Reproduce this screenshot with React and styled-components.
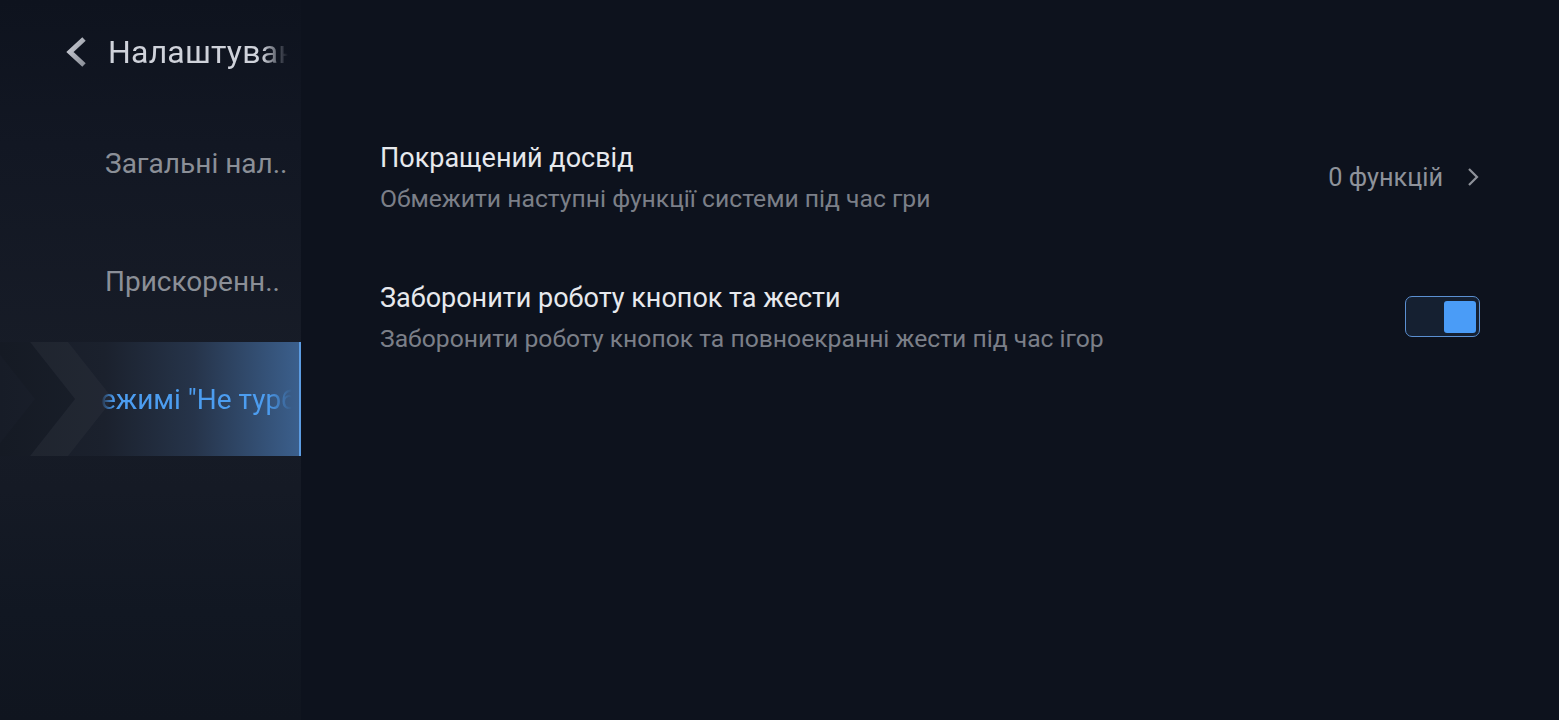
import React from 'react';
import styled, { createGlobalStyle } from 'styled-components';

const GlobalStyle = createGlobalStyle`
  html, body {
    margin: 0;
    padding: 0;
    background: #0d121d;
  }
  * {
    box-sizing: border-box;
  }
`;

const navItems = [
  { label: 'Загальні налаштування', short: 'Загальні нал..' },
  { label: 'Прискорення', short: 'Прискоренн..' },
  { label: 'Ігри в режимі "Не турбувати"', active: true, offset: -96 },
];

const BackIcon = () => (
  <BackSvg width='26' height='32' viewBox='0 0 26 32'>
    <defs>
      <linearGradient id='backGrad' x1='0' y1='0' x2='1' y2='1'>
        <stop offset='0' stopColor='#c9ccd4' />
        <stop offset='1' stopColor='#8c9099' />
      </linearGradient>
    </defs>
    <path d='M21 3 L7 16 L21 29' fill='none' stroke='url(#backGrad)' strokeWidth='5' strokeLinejoin='miter' />
  </BackSvg>
);

const Chevrons = () => (
  <ChevronArt width='140' height='114' viewBox='0 0 140 114' preserveAspectRatio='none'>
    <polygon points='-10,0 30,0 75,57 30,114 -10,114 35,57' fill='rgba(0,0,0,0.06)' />
    <polygon points='30,0 68,0 113,57 68,114 30,114 75,57' fill='rgba(255,255,255,0.03)' />
  </ChevronArt>
);

const App = () => {
  return (
    <Page>
      <GlobalStyle />
      <Sidebar>
        <Header>
          <BackIcon />
          <HeaderTitle>Налаштування</HeaderTitle>
        </Header>
        <Nav>
          {navItems.map((item) =>
            item.active ? (
              <ActiveItem key={item.label}>
                <Chevrons />
                <Marquee>
                  <MarqueeText $offset={item.offset}>{item.label}</MarqueeText>
                </Marquee>
              </ActiveItem>
            ) : (
              <NavItem key={item.label} title={item.label}>
                {item.short}
              </NavItem>
            )
          )}
        </Nav>
      </Sidebar>

      <Main>
        <Row>
          <RowText>
            <RowTitle>Покращений досвід</RowTitle>
            <RowSub>Обмежити наступні функції системи під час гри</RowSub>
          </RowText>
          <Value>
            0 функцій
            <svg width='14' height='22' viewBox='0 0 14 22'>
              <path d='M3 3 L11 11 L3 19' fill='none' stroke='#8e929a' strokeWidth='2.2' />
            </svg>
          </Value>
        </Row>
        <Row>
          <RowText>
            <RowTitle>Заборонити роботу кнопок та жести</RowTitle>
            <RowSub>Заборонити роботу кнопок та повноекранні жести під час ігор</RowSub>
          </RowText>
          <Toggle $on>
            <Knob />
          </Toggle>
        </Row>
      </Main>
    </Page>
  );
};

const Page = styled.div`
  display: flex;
  width: 100vw;
  height: 720px;
  background: #0d121d;
  font-family: Roboto, 'Noto Sans', 'Liberation Sans', sans-serif;
  overflow: hidden;
`;

const Sidebar = styled.aside`
  width: 301px;
  flex-shrink: 0;
  display: flex;
  flex-direction: column;
  background: linear-gradient(180deg, #0e131e 0%, #121723 20%, #171c27 50%, #151a25 68%, #111722 85%, #10151f 100%);
`;

const Header = styled.div`
  height: 106px;
  display: flex;
  align-items: center;
  gap: 19px;
  padding: 0 0 2px 63px;
  overflow: hidden;
  -webkit-mask-image: linear-gradient(90deg, #000 262px, transparent 288px);
  mask-image: linear-gradient(90deg, #000 262px, transparent 288px);
`;

const BackSvg = styled.svg`
  flex-shrink: 0;
`;

const HeaderTitle = styled.h1`
  margin: 0;
  font-size: 32px;
  font-weight: 400;
  color: #cfd2da;
  white-space: nowrap;
  letter-spacing: 0.2px;
`;

const Nav = styled.nav`
  display: flex;
  flex-direction: column;
  gap: 4px;
`;

const NavItem = styled.div`
  height: 114px;
  display: flex;
  align-items: center;
  padding-left: 105px;
  font-size: 28px;
  color: #8b8f97;
  white-space: nowrap;
`;

const ActiveItem = styled.div`
  position: relative;
  height: 114px;
  display: flex;
  align-items: center;
  padding-left: 100px;
  background: linear-gradient(90deg, #171c27 0%, #1b212d 35%, #26344a 65%, #3b5f8c 100%);
  border-right: 2px solid #5c9ce2;
`;

const ChevronArt = styled.svg`
  position: absolute;
  left: 0;
  top: 0;
`;

const Marquee = styled.div`
  position: relative;
  flex: 1;
  overflow: hidden;
  -webkit-mask-image: linear-gradient(90deg, transparent 0px, #000 14px, #000 168px, transparent 192px);
  mask-image: linear-gradient(90deg, transparent 0px, #000 14px, #000 168px, transparent 192px);
`;

const MarqueeText = styled.div`
  font-size: 28px;
  color: #4c9df0;
  white-space: nowrap;
  transform: translateX(${(p) => p.$offset}px);
`;

const Main = styled.main`
  flex: 1;
  padding: 108px 79px 0 79px;
  display: flex;
  flex-direction: column;
`;

const Row = styled.div`
  height: 140px;
  display: flex;
  align-items: center;
  justify-content: space-between;
`;

const RowText = styled.div`
  display: flex;
  flex-direction: column;
  gap: 7px;
`;

const RowTitle = styled.div`
  font-size: 27px;
  line-height: 34px;
  color: #e7e9ed;
`;

const RowSub = styled.div`
  font-size: 24.7px;
  line-height: 33px;
  color: #7b7f88;
`;

const Value = styled.div`
  display: flex;
  align-items: center;
  gap: 23px;
  font-size: 25.3px;
  color: #8e929a;
  margin-top: -2px;
`;

const Toggle = styled.div`
  width: 75px;
  height: 41px;
  border-radius: 7px;
  border: 1.5px solid ${(p) => (p.$on ? '#5b90d2' : '#4a4f5a')};
  background: #152031;
  display: flex;
  align-items: center;
  justify-content: ${(p) => (p.$on ? 'flex-end' : 'flex-start')};
  padding: 0 3px;
  margin-top: -3px;
`;

const Knob = styled.div`
  width: 32px;
  height: 32px;
  border-radius: 3px;
  background: #4a9cf7;
`;

export default App;
